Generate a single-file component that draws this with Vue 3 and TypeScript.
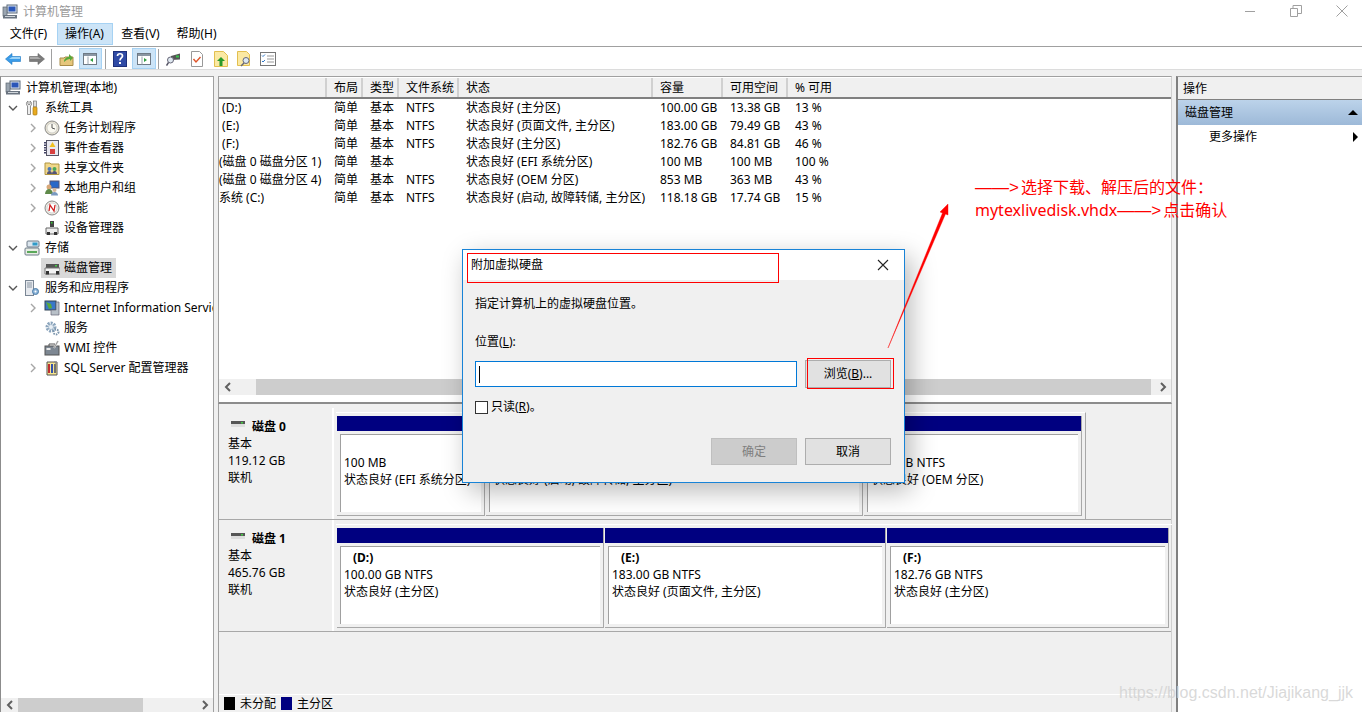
<template>
  <div class="app">
    <header class="titlebar">
      <span class="svg-ic title-ic" v-html="icons.computer"></span>
      <span class="title-text">计算机管理</span>
      <div class="win-btns">
        <svg width="12" height="12" viewBox="0 0 12 12"><path d="M1 6.5h10" stroke="#a0a0a0" fill="none" /></svg>
        <svg width="12" height="12" viewBox="0 0 12 12"><path d="M.5 3.5h7v8h-7zM3 3.5V.5h8.500v8H7.500" stroke="#a0a0a0" fill="none" /></svg>
        <svg width="12" height="12" viewBox="0 0 12 12"><path d="M.5.5l11 11M11.500.5l-11 11" stroke="#a0a0a0" fill="none" /></svg>
      </div>
    </header>

    <nav class="menubar">
      <span v-for="m in menus" :key="m" class="menu-item" :class="{ active: m === '操作(A)' }">{{ m }}</span>
    </nav>

    <div class="toolbar">
      <template v-for="(t, i) in tools" :key="i">
        <i v-if="t === 'sep'" class="tool-sep"></i>
        <span v-else class="tool" :class="{ on: t === 'paneL' || t === 'paneR' }" v-html="icons[t]"></span>
      </template>
    </div>

    <main class="workspace">
      <aside class="tree-pane">
        <div class="tree">
          <div
            v-for="row in tree"
            :key="row.text"
            class="tree-row"
            :class="'lv' + row.level"
          >
            <span class="chev">
              <svg v-if="row.arrow === 'open'" width="10" height="10" viewBox="0 0 10 10"><path d="M1 3l4 4 4-4" stroke="#555" stroke-width="1.400" fill="none" /></svg>
              <svg v-else-if="row.arrow === 'closed'" width="10" height="10" viewBox="0 0 10 10"><path d="M3 1l4 4-4 4" stroke="#a6a6a6" stroke-width="1.400" fill="none" /></svg>
            </span>
            <div class="tree-label" :class="{ selected: row.selected }">
              <span class="svg-ic" v-html="icons[row.icon]"></span>
              <span class="tree-text">{{ row.text }}</span>
            </div>
          </div>
        </div>
        <div class="hscroll tree-scroll">
          <span class="arrow"><svg width="8" height="10" viewBox="0 0 8 10"><path d="M6 1L2 5l4 4" stroke="#606060" stroke-width="2" fill="none" /></svg></span>
          <div class="track"><div class="thumb"></div></div>
          <span class="arrow"><svg width="8" height="10" viewBox="0 0 8 10"><path d="M2 1l4 4-4 4" stroke="#606060" stroke-width="2" fill="none" /></svg></span>
        </div>
      </aside>

      <section class="center-pane">
        <div class="volume-list">
          <div class="vol-row vol-head">
            <span v-for="h in headers" :key="h" class="vol-cell">{{ h }}</span>
          </div>
          <div class="vol-body">
            <div v-for="v in volumes" :key="v[0]" class="vol-row">
              <span v-for="(c, i) in v" :key="i" class="vol-cell">{{ c }}</span>
            </div>
          </div>
          <div class="hscroll list-scroll">
            <span class="arrow"><svg width="8" height="10" viewBox="0 0 8 10"><path d="M6 1L2 5l4 4" stroke="#606060" stroke-width="2" fill="none" /></svg></span>
            <div class="track"><div class="thumb"></div></div>
            <span class="arrow"><svg width="8" height="10" viewBox="0 0 8 10"><path d="M2 1l4 4-4 4" stroke="#606060" stroke-width="2" fill="none" /></svg></span>
          </div>
        </div>

        <div class="disk-area">
          <div class="disks">
            <div v-for="d in disks" :key="d.name" class="disk-row">
              <div class="disk-label">
                <div class="disk-name"><span class="svg-ic disk-ic" v-html="icons.diskSmall"></span><b>{{ d.name }}</b></div>
                <div>基本</div>
                <div>{{ d.size }}</div>
                <div>联机</div>
              </div>
              <div class="partitions" :class="{ short: d.short }">
                <div v-for="p in d.parts" :key="p.status" class="partition" :style="{ width: p.width + 'px' }">
                  <div class="part-bar"></div>
                  <div class="part-box">
                    <b class="part-name">{{ p.name }}</b>
                    <div class="part-text">{{ p.size }}</div>
                    <div class="part-text">{{ p.status }}</div>
                  </div>
                </div>
              </div>
            </div>
          </div>
          <div class="legend">
            <i class="swatch black"></i><span>未分配</span>
            <i class="swatch navy"></i><span>主分区</span>
          </div>
        </div>
      </section>

      <aside class="action-pane">
        <div class="action-head">操作</div>
        <div class="action-group"><span>磁盘管理</span><i class="tri-up"></i></div>
        <div class="action-more"><span>更多操作</span><i class="tri-right"></i></div>
      </aside>
    </main>

    <div class="dialog">
      <div class="dlg-title">
        <span>附加虚拟硬盘</span>
        <svg width="12" height="12" viewBox="0 0 12 12"><path d="M1 1l10 10M11 1L1 11" stroke="#222" stroke-width="1.100" fill="none" /></svg>
      </div>
      <div class="dlg-body">
        <p class="dlg-desc">指定计算机上的虚拟硬盘位置。</p>
        <p class="dlg-loc">位置(<u>L</u>):</p>
        <div class="dlg-input-row">
          <div class="dlg-input"><i class="caret"></i></div>
          <div class="btn browse">浏览(<u>B</u>)...</div>
        </div>
        <div class="dlg-check"><i class="check-box"></i><span>只读(<u>R</u>)。</span></div>
        <div class="dlg-actions">
          <div class="btn disabled">确定</div>
          <div class="btn">取消</div>
        </div>
      </div>
    </div>

    <!-- 截图上的红色标注 -->
    <div class="mark mark-title"></div>
    <div class="mark mark-browse"></div>
    <svg class="mark-arrow" width="80" height="160" viewBox="0 0 80 160">
      <path d="M1 158L55.500 23 53 22l8-8 0 11-2.500-1z" fill="#f00" stroke="#f00" stroke-width=".4" />
    </svg>
    <div class="note"><span class="dash">——&gt;</span>选择下载、解压后的文件：<br />mytexlivedisk.vhdx<span class="dash">——&gt;</span>点击确认</div>
    <div class="watermark">https://blog.csdn.net/Jiajikang_jjk</div>
  </div>
</template>

<script setup lang="ts">
type Row = { text: string; level: number; icon: string; arrow?: 'open' | 'closed'; selected?: boolean }

const menus = ['文件(F)', '操作(A)', '查看(V)', '帮助(H)']
const tools = ['back', 'forward', 'sep', 'up', 'paneL', 'sep', 'help', 'paneR', 'sep', 'scope', 'check', 'noteUp', 'noteFind', 'list']

const tree: Row[] = [
  { text: '计算机管理(本地)', level: 0, icon: 'computer' },
  { text: '系统工具', level: 1, icon: 'tools', arrow: 'open' },
  { text: '任务计划程序', level: 2, icon: 'clock', arrow: 'closed' },
  { text: '事件查看器', level: 2, icon: 'log', arrow: 'closed' },
  { text: '共享文件夹', level: 2, icon: 'share', arrow: 'closed' },
  { text: '本地用户和组', level: 2, icon: 'users', arrow: 'closed' },
  { text: '性能', level: 2, icon: 'perf', arrow: 'closed' },
  { text: '设备管理器', level: 2, icon: 'device' },
  { text: '存储', level: 1, icon: 'storage', arrow: 'open' },
  { text: '磁盘管理', level: 2, icon: 'disk', selected: true },
  { text: '服务和应用程序', level: 1, icon: 'server', arrow: 'open' },
  { text: 'Internet Information Services (IIS)', level: 2, icon: 'iis', arrow: 'closed' },
  { text: '服务', level: 2, icon: 'gear' },
  { text: 'WMI 控件', level: 2, icon: 'wmi' },
  { text: 'SQL Server 配置管理器', level: 2, icon: 'sql', arrow: 'closed' }
]

const headers = ['', '布局', '类型', '文件系统', '状态', '容量', '可用空间', '% 可用']
const volumes = [
  [' (D:)', '简单', '基本', 'NTFS', '状态良好 (主分区)', '100.00 GB', '13.38 GB', '13 %'],
  [' (E:)', '简单', '基本', 'NTFS', '状态良好 (页面文件, 主分区)', '183.00 GB', '79.49 GB', '43 %'],
  [' (F:)', '简单', '基本', 'NTFS', '状态良好 (主分区)', '182.76 GB', '84.81 GB', '46 %'],
  ['(磁盘 0 磁盘分区 1)', '简单', '基本', '', '状态良好 (EFI 系统分区)', '100 MB', '100 MB', '100 %'],
  ['(磁盘 0 磁盘分区 4)', '简单', '基本', 'NTFS', '状态良好 (OEM 分区)', '853 MB', '363 MB', '43 %'],
  ['系统 (C:)', '简单', '基本', 'NTFS', '状态良好 (启动, 故障转储, 主分区)', '118.18 GB', '17.74 GB', '15 %']
]

const disks = [
  {
    name: '磁盘 0', size: '119.12 GB', short: true,
    parts: [
      { width: 148, name: '', size: '100 MB', status: '状态良好 (EFI 系统分区)' },
      { width: 377, name: '系统 (C:)', size: '118.18 GB NTFS', status: '状态良好 (启动, 故障转储, 主分区)' },
      { width: 218, name: '', size: '853 MB NTFS', status: '状态良好 (OEM 分区)' }
    ]
  },
  {
    name: '磁盘 1', size: '465.76 GB', short: false,
    parts: [
      { width: 267, name: '(D:)', size: '100.00 GB NTFS', status: '状态良好 (主分区)' },
      { width: 281, name: '(E:)', size: '183.00 GB NTFS', status: '状态良好 (页面文件, 主分区)' },
      { width: 282, name: '(F:)', size: '182.76 GB NTFS', status: '状态良好 (主分区)' }
    ]
  }
]

const svg = (body: string) => `<svg width="16" height="16" viewBox="0 0 16 16">${body}</svg>`
const pane = (arrow: string) => svg(`<rect x="1.500" y="2.500" width="13" height="11" fill="#fff" stroke="#6f7a85"/><path d="M2 3h12v2H2z" fill="#8a96a3"/><path d="M6 5.500v8" stroke="#9aa5b0"/>${arrow}`)

// 小图标，全部手绘，尺寸 16x16
const icons: Record<string, string> = {
  computer: svg('<rect x="5" y="1" width="10" height="8" fill="#dfe6ee" stroke="#5a6a7c"/><rect x="6.500" y="2.500" width="7" height="5" fill="#2a56b8"/><rect x="1" y="3" width="4" height="9" fill="#9aa5b0" stroke="#5c6670" stroke-width=".7"/><path d="M1 11h14v3.500H1z" fill="#6a7480"/><path d="M3 12.500h10" stroke="#cfd5db"/>'),
  back: svg('<path d="M.5 8L7 2.500V5.500h8.500v5H7v3z" fill="#3a9be8" stroke="#1f78c4" stroke-width=".6"/><path d="M7 6h8v2H4z" fill="#9ad2f7"/>'),
  forward: svg('<path d="M15.500 8L9 2.500V5.500H.5v5H9v3z" fill="#7b7b7b" stroke="#666" stroke-width=".6"/><path d="M9 6H1v2h11z" fill="#aaa"/>'),
  up: svg('<path d="M1 7h4l1-1h8v8.500H1z" fill="#e6c67c" stroke="#a98c48"/><path d="M5 11c0-3 2-5 5-5V3l4 4-3 3V8c-2 0-4 1-6 3z" fill="#58a83a"/>'),
  paneL: pane('<path d="M11 7v4L8 9z" fill="#2f9e3f"/>'),
  paneR: pane('<path d="M8 7v4l3-2z" fill="#2f9e3f"/>'),
  help: svg('<rect x="1.500" y=".5" width="13" height="15" fill="#2f4aa5" stroke="#1d2f7a"/><path d="M5.500 5c0-3 5-3 5 0 0 2-2.500 2-2.500 4.500" stroke="#fff" stroke-width="1.700" fill="none"/><rect x="7" y="11" width="2" height="2" fill="#fff"/>'),
  scope: svg('<path d="M5 5l9-2.500v6L5 9z" fill="#555"/><rect x="10" y="4.500" width="3" height="2" fill="#38c24a"/><circle cx="4.500" cy="9" r="3" fill="#dfe8f0" stroke="#667"/><path d="M2.500 11.500L.5 14.500" stroke="#556" stroke-width="1.500"/>'),
  check: svg('<path d="M2.500.5h8l3 3v12h-11z" fill="#fff" stroke="#999"/><path d="M4.500 8l2.500 3 4.500-5" stroke="#e0552a" stroke-width="1.400" fill="none"/>'),
  noteUp: svg('<path d="M1.500.5h9l4 4v11h-13z" fill="#fbe9a3" stroke="#e2bf4f"/><path d="M8 6l4 4h-2.500v5h-3v-5H4z" fill="#2a9a2a"/>'),
  noteFind: svg('<path d="M1.500.5h9l3 3v11h-12z" fill="#fbe9a3" stroke="#e2bf4f"/><circle cx="10" cy="9.500" r="3" fill="#dce8f2" stroke="#667"/><path d="M8 12l-3 3" stroke="#667" stroke-width="1.500"/>'),
  list: svg('<rect x=".5" y="1.500" width="15" height="13" fill="#fff" stroke="#777"/><path d="M2 4.500l1 1 2-2M2 10l1 1 2-2" stroke="#2f78c8" fill="none"/><path d="M7 5h7M7 8h7M7 11h7" stroke="#999"/>'),
  tools: svg('<path d="M4 1v3l1 1 1-1V1c2 1 2 4 .5 5v8.500h-3V6C2 5 2 2 4 1z" fill="#eee" stroke="#777" stroke-width=".8"/><rect x="9.500" y="1" width="3" height="6" fill="#ddd" stroke="#777" stroke-width=".7"/><rect x="9" y="7" width="4" height="8" rx="1" fill="#e8aa20" stroke="#a87810" stroke-width=".7"/>'),
  clock: svg('<circle cx="8" cy="8" r="7" fill="#e8e4d4" stroke="#888"/><circle cx="8" cy="8" r="5" fill="#fbfaf2" stroke="#bbb" stroke-width=".6"/><path d="M8 4v4l3 1" stroke="#555" fill="none"/>'),
  log: svg('<rect x="2.500" y=".5" width="12" height="15" fill="#e8e8f0" stroke="#556"/><path d="M1 2v12" stroke="#446" stroke-width="2" stroke-dasharray="1.500 1"/><path d="M8.500 2l3 5h-6z" fill="#f0c020"/><rect x="6" y="9" width="5" height="5" fill="#d84040"/>'),
  share: svg('<path d="M1 3h5l1 1h8v10.500H1z" fill="#f1d78a" stroke="#b09540"/><circle cx="5.500" cy="9" r="2" fill="#4a78b8"/><circle cx="10.500" cy="9" r="2" fill="#4aa858"/><path d="M3 14c0-2 1-3 2.500-3S8 12 8 14zM8 14c0-2 1-3 2.500-3s2.500 1 2.500 3z" fill="#557"/>'),
  users: svg('<rect x="6" y="1" width="9" height="7" fill="#2a68c8" stroke="#557"/><circle cx="5" cy="7" r="2.500" fill="#d8a878"/><path d="M1 14c0-3 2-5 4-5s4 2 4 5z" fill="#5f8a4a"/><circle cx="10.500" cy="10" r="2" fill="#d8b898"/><path d="M7 15.500c0-2 1.500-3.500 3.500-3.500s3.500 1.500 3.500 3.500z" fill="#7a9ac0"/>'),
  perf: svg('<circle cx="8" cy="8" r="7" fill="#f0eee6" stroke="#888"/><circle cx="8" cy="8" r="5" fill="#fff" stroke="#bbb" stroke-width=".6"/><path d="M5 11l1-6 4 6 1-6" stroke="#d02020" stroke-width="1.300" fill="none"/>'),
  device: svg('<rect x="6" y="1" width="4" height="6" fill="#444"/><rect x="7" y="2" width="1.500" height="1.500" fill="#3c3"/><path d="M2 8h12v6H2z" fill="#eee" stroke="#666"/><rect x="3" y="12" width="3" height="3" fill="#333"/><rect x="10" y="12" width="3" height="3" fill="#333"/>'),
  storage: svg('<rect x="3" y="1" width="12" height="6" rx="1" fill="#dce6ee" stroke="#6c7a88"/><rect x="8.500" y="2.500" width="5" height="3" fill="#2f9ac8"/><rect x="1" y="8" width="14" height="7" rx="1" fill="#e8ece4" stroke="#6c7a88"/><path d="M3 12h10" stroke="#5aa85a" stroke-width="2"/>'),
  disk: svg('<path d="M2 4h13v4H2z" fill="#555"/><rect x="11" y="5" width="2" height="1.500" fill="#4c4"/><path d="M1 8h15v6H1z" fill="#f3f3f3" stroke="#777"/><rect x="2" y="11" width="3" height="3.500" fill="#333"/><rect x="12" y="11" width="3" height="3.500" fill="#333"/>'),
  diskSmall: svg('<path d="M1 4h14v3H1z" fill="#555"/><rect x="11" y="5" width="2" height="1.500" fill="#4c4"/><path d="M1 7h14v3H1z" fill="#ddd"/>'),
  server: svg('<rect x="1.500" y=".5" width="8" height="15" fill="#e6e9ee" stroke="#7a8694"/><path d="M3 3h5M3 5h5M3 7h5" stroke="#8a96a3"/><circle cx="11.500" cy="11.500" r="3" fill="#8cb4d8" stroke="#4a7ba8"/><circle cx="11.500" cy="11.500" r="1" fill="#fff"/>'),
  iis: svg('<rect x="1" y="1" width="11" height="9" fill="#3a78c8" stroke="#345"/><path d="M2 2l5 2 1 4-3 1z" fill="#5aa83a"/><path d="M12 2h3v13H7v-5h5z" fill="#b8c0c8" stroke="#667" stroke-width=".7"/>'),
  gear: svg('<circle cx="7" cy="7" r="4" fill="none" stroke="#8aa4bc" stroke-width="3" stroke-dasharray="2 1"/><circle cx="7" cy="7" r="2.500" fill="#e8eef4" stroke="#8aa4bc" stroke-width=".6"/><circle cx="12" cy="12" r="2.500" fill="none" stroke="#7a94ac" stroke-width="2" stroke-dasharray="1.500 1"/>'),
  wmi: svg('<rect x="1" y="6" width="14" height="9" fill="#7d8792" stroke="#555"/><path d="M5 6V4h6v2" stroke="#555" fill="none"/><rect x="2.500" y="8" width="4" height="2" fill="#e8e8e8"/><path d="M10 8l4-7" stroke="#ddd" stroke-width="2"/><path d="M10 8l4-7" stroke="#666" stroke-width=".6"/>'),
  sql: svg('<path d="M3 2h10v13H3z" fill="#f6e690" stroke="#555"/><path d="M5 4v9" stroke="#c03030" stroke-width="2"/><path d="M8 4v9" stroke="#3050b0" stroke-width="2"/><path d="M11 4v9" stroke="#707070" stroke-width="2"/><path d="M10 1l3 1-1 3" fill="#888"/>')
}
</script>

<style>
html,
body {
  margin: 0;
  background: #fff;
  overflow: hidden;
}
</style>

<style scoped>
.app {
  position: relative;
  width: 1362px;
  height: 712px;
  overflow: hidden;
  display: flex;
  flex-direction: column;
  background: #fff;
  color: #000;
  font: 12px/16px "Noto Sans", "Noto Sans CJK SC", sans-serif;
}
.svg-ic {
  display: inline-flex;
  width: 16px;
  height: 16px;
  flex: none;
}
.titlebar {
  height: 23px;
  display: flex;
  align-items: center;
  padding-left: 2px;
  flex: none;
}
.title-ic {
  margin-top: 1px;
}
.title-text {
  margin-left: 5px;
  color: #999;
  font-size: 12px;
}
.win-btns {
  margin-left: auto;
  margin-right: 14px;
  display: flex;
  gap: 34px;
  margin-top: -2px;
}
.menubar {
  height: 23px;
  display: flex;
  border-bottom: 1px solid #a0a0a0;
  padding-left: 0.5px;
  flex: none;
}
.menu-item {
  display: flex;
  align-items: center;
  justify-content: center;
  width: 56px;
  height: 22px;
  box-sizing: border-box;
}
.menu-item.active {
  background: #cce4f7;
  border: 1px solid #a6d2f3;
}
.toolbar {
  height: 22px;
  display: flex;
  align-items: flex-end;
  padding-left: 1.500px;
  border-bottom: 1px solid #dcdcdc;
  flex: none;
}
.tool {
  width: 23.500px;
  height: 21px;
  display: flex;
  align-items: center;
  justify-content: center;
  box-sizing: border-box;
}
.tool.on {
  background: #cce4f7;
  border: 1px solid #a6d2f3;
}
.tool-sep {
  width: 1px;
  height: 20px;
  background: #a0a0a0;
  margin: 0 3px 0 2.500px;
}
.workspace {
  flex: 1;
  min-height: 0;
  display: flex;
  padding-top: 6px;
  background: #f0f0f0;
}
.tree-pane {
  width: 214px;
  box-sizing: border-box;
  border-left: 1px solid #8c8c8c;
  border-top: 1px solid #a0a0a0;
  border-right: 1px solid #a0a0a0;
  background: #fff;
  display: flex;
  flex-direction: column;
  flex: none;
}
.tree {
  flex: 1;
  min-height: 0;
  overflow: hidden;
  padding-top: 1px;
}
.tree-row {
  height: 20px;
  display: flex;
  align-items: center;
  white-space: nowrap;
}
.chev {
  width: 10px;
  height: 10px;
  display: flex;
  flex: none;
}
.lv0 .chev {
  width: 0;
}
.lv0 {
  padding-left: 4px;
}
.lv1 {
  padding-left: 7px;
}
.lv2 {
  padding-left: 27px;
}
.tree-label {
  display: flex;
  align-items: center;
  gap: 5px;
  height: 20px;
  min-width: 0;
  padding-left: 2px;
  padding-right: 4px;
  margin-left: 4px;
}
.lv2 .tree-label {
  margin-left: 3px;
  padding-left: 3px;
  gap: 4px;
}
.lv0 .tree-label {
  padding-left: 0;
  margin-left: 0;
}
.tree-label.selected {
  background: #d9d9d9;
}
.hscroll {
  display: flex;
  align-items: center;
  background: #f0f0f0;
  flex: none;
}
.arrow {
  width: 17px;
  display: flex;
  align-items: center;
  justify-content: center;
  flex: none;
}
.track {
  flex: 1;
  height: 100%;
}
.thumb {
  height: 100%;
  background: #cdcdcd;
}
.tree-scroll {
  height: 14px;
}
.tree-scroll .thumb {
  width: 125px;
}
.center-pane {
  width: 954px;
  margin-left: 4px;
  flex: none;
  display: flex;
  flex-direction: column;
}
.volume-list {
  height: 328px;
  box-sizing: border-box;
  background: #fff;
  border-top: 1px solid #a0a0a0;
  border-left: 1px solid #a0a0a0;
  border-right: 1px solid #d0d0d0;
  border-bottom: 2px solid #8c8c8c;
  padding-top: 1px;
  display: flex;
  flex-direction: column;
}
.vol-row {
  display: grid;
  grid-template-columns: 108px 36px 36px 60px 194px 70px 65px 1fr;
  height: 18px;
  align-items: center;
  white-space: pre;
}
.vol-head {
  height: 19px;
  background: #f0f0f0;
  border-bottom: 2px solid #808080;
  align-items: stretch;
  flex: none;
}
.vol-head .vol-cell {
  display: flex;
  align-items: center;
  padding-top: 1px;
  border-right: 2px solid #d0d0d0;
}
.vol-head .vol-cell:last-child {
  border-right: 0;
}
.vol-cell {
  box-sizing: border-box;
  padding-left: 7px;
  overflow: hidden;
}
.vol-body .vol-cell:first-child {
  padding-left: 0;
}
.vol-body {
  flex: 1;
  min-height: 0;
}
.list-scroll {
  height: 16px;
  margin-bottom: 7px;
}
.list-scroll .track {
  padding-left: 20px;
}
.list-scroll .thumb {
  margin-right: 3px;
}
.disk-area {
  flex: 1;
  min-height: 0;
  display: flex;
  flex-direction: column;
  border-left: 1px solid #a0a0a0;
  border-right: 1px solid #d0d0d0;
  background: #f0f0f0;
}
.disks {
  flex: 1;
  padding-top: 4px;
}
.disk-row {
  height: 112px;
  display: flex;
  box-sizing: border-box;
  border-bottom: 1px solid #a8a8a8;
}
.disk-label {
  width: 115px;
  box-sizing: border-box;
  padding: 10px 0 0 9px;
  border-right: 2px solid #fff;
  line-height: 17px;
  flex: none;
  margin-right: 2px;
}
.disk-name {
  display: flex;
  align-items: center;
  height: 17px;
}
.disk-ic {
  margin-right: 6px;
  margin-left: 2px;
  margin-top: -3px;
}
.partitions {
  display: flex;
  margin-top: 4px;
  padding: 3px 3px 3px 1px;
  border-top: 1px solid #fff;
  gap: 1px;
  box-sizing: border-box;
}
.partitions.short {
  border-right: 1px solid #a8a8a8;
}
.partition {
  flex: none;
  border-bottom: 1px solid #a8a8a8;
  border-right: 1px solid #a8a8a8;
  box-sizing: border-box;
  display: flex;
  flex-direction: column;
  padding-bottom: 3px;
}
.part-bar {
  height: 15px;
  background: #000080;
  margin-bottom: 3px;
  flex: none;
}
.part-box {
  flex: 1;
  margin: 0 3px;
  background: #fff;
  border-top: 1px solid #a0a0a0;
  border-left: 1px solid #a0a0a0;
  padding: 2px 0 0 3px;
  line-height: 17px;
  white-space: nowrap;
  overflow: hidden;
}
.part-name {
  display: block;
  height: 17px;
  margin-left: 9px;
}
.part-text {
  height: 17px;
}
.short .part-box {
  padding-top: 19px;
}
.short .part-name {
  display: none;
}
.legend {
  height: 17px;
  border-top: 1px solid #fff;
  display: flex;
  align-items: center;
  padding-left: 5px;
}
.swatch {
  width: 11px;
  height: 13px;
  margin-right: 5px;
}
.swatch.black {
  background: #000;
}
.swatch.navy {
  background: #000080;
  margin-left: 5px;
}
.action-pane {
  flex: 1;
  margin-left: 4px;
  background: #fff;
  border-left: 2px solid #808080;
  border-top: 1px solid #a0a0a0;
}
.action-head {
  height: 20px;
  padding-top: 2px;
  display: flex;
  align-items: center;
  padding-left: 5px;
  background: #f0f0f0;
  border-bottom: 1px solid #808080;
}
.action-group {
  height: 25px;
  display: flex;
  align-items: center;
  justify-content: space-between;
  padding: 0 4px 0 7px;
  background: linear-gradient(#bcd3ea, #9db9d8);
}
.tri-up {
  width: 0;
  height: 0;
  border-left: 5px solid transparent;
  border-right: 5px solid transparent;
  border-bottom: 5px solid #000;
}
.action-more {
  height: 24px;
  display: flex;
  align-items: center;
  justify-content: space-between;
  padding: 0 4px 0 31px;
}
.tri-right {
  width: 0;
  height: 0;
  border-top: 5px solid transparent;
  border-bottom: 5px solid transparent;
  border-left: 5px solid #000;
}
.dialog {
  position: absolute;
  left: 462px;
  top: 249px;
  width: 443px;
  height: 234px;
  box-sizing: border-box;
  border: 1px solid #1883d7;
  background: #f0f0f0;
  box-shadow: 6px 8px 24px rgba(0, 0, 0, 0.28);
  display: flex;
  flex-direction: column;
}
.dlg-title {
  height: 30px;
  background: #fff;
  display: flex;
  align-items: center;
  justify-content: space-between;
  padding: 0 15px 0 8px;
  flex: none;
}
.dlg-body {
  flex: 1;
  padding: 0 12px;
  display: flex;
  flex-direction: column;
}
.dlg-desc {
  margin: 16px 0 0;
}
.dlg-loc {
  margin: 22px 0 0;
}
.dlg-input-row {
  margin-top: 10px;
  display: flex;
  align-items: flex-start;
  gap: 8px;
}
.dlg-input {
  width: 322px;
  height: 26px;
  margin-top: 1px;
  box-sizing: border-box;
  border: 1px solid #0078d7;
  background: #fff;
  padding: 4px 3px;
}
.caret {
  display: block;
  width: 1px;
  height: 17px;
  background: #000;
}
.btn {
  width: 86px;
  box-sizing: border-box;
  border: 1px solid #adadad;
  background: #e1e1e1;
  display: flex;
  align-items: center;
  justify-content: center;
  height: 27px;
}
.browse {
  height: 28px;
}
.dlg-check {
  margin-top: 11px;
  display: flex;
  align-items: center;
  gap: 3px;
}
.check-box {
  width: 13px;
  height: 13px;
  box-sizing: border-box;
  border: 1px solid #333;
  background: #fff;
}
.dlg-actions {
  margin-top: 23px;
  display: flex;
  gap: 8px;
  justify-content: flex-end;
  margin-right: 1px;
}
.btn.disabled {
  background: #cccccc;
  border-color: #bfbfbf;
  color: #7f7f7f;
}
.mark {
  position: absolute;
  box-sizing: border-box;
  border: 1px solid #f00;
}
.mark-title {
  left: 467px;
  top: 253px;
  width: 312px;
  height: 30px;
}
.mark-browse {
  left: 807px;
  top: 358px;
  width: 87px;
  height: 31px;
}
.mark-arrow {
  position: absolute;
  left: 887px;
  top: 190px;
}
.note {
  position: absolute;
  left: 975px;
  top: 176px;
  color: #f00;
  font-size: 16px;
  line-height: 22px;
  white-space: nowrap;
}
.dash {
  font-family: "Liberation Sans", sans-serif;
  font-size: 17px;
  margin-right: 2px;
}
.watermark {
  position: absolute;
  right: 9px;
  bottom: 9px;
  color: rgba(210, 210, 210, 0.85);
  font: 16px/20px "Liberation Sans", sans-serif;
}
</style>
